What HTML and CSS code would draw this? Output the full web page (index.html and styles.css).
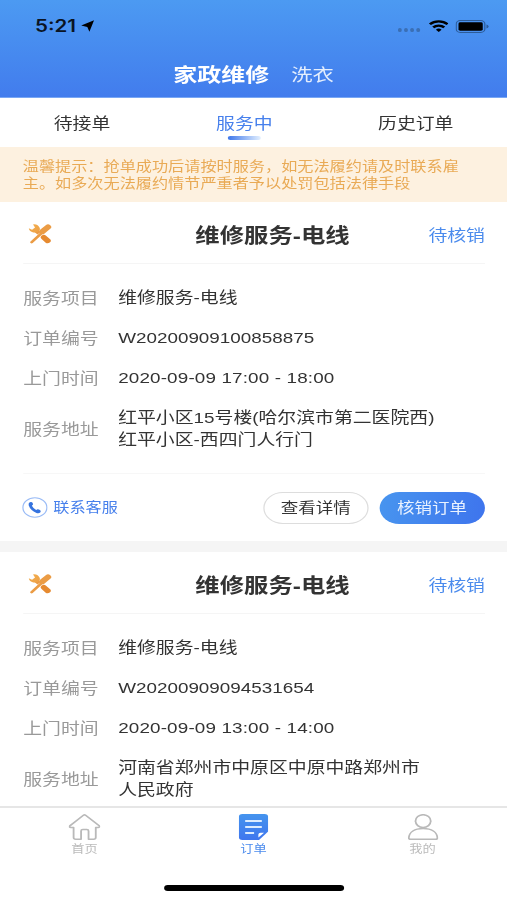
FILE: index.html
```html
<!DOCTYPE html>
<html lang="zh-CN">
<head>
<meta charset="utf-8">
<title>订单</title>
<link rel="stylesheet" href="styles.css">
</head>
<body>
<svg width="0" height="0" class="defs">
  <defs>
    <linearGradient id="tool" x1="0" y1="0" x2="1" y2="1"><stop offset="0" stop-color="#f3b04f"/><stop offset="1" stop-color="#eda046"/></linearGradient>
    <linearGradient id="doc" x1="0" y1="0" x2="0" y2="1"><stop offset="0" stop-color="#4594ee"/><stop offset="1" stop-color="#3f76ee"/></linearGradient>
    <symbol id="tools" viewBox="0 0 20 20">
      <path d="M11.6 7.6 16.2 3" stroke="#eb9c45" stroke-width="5.2" stroke-linecap="round"/>
      <path d="M11.4 8.6 2.8 18.2" stroke="#eb9c45" stroke-width="2.4" stroke-linecap="round"/>
      <path d="M6.4 7 8.8 9.4" stroke="#eb9c45" stroke-width="3.2"/>
      <path d="M12.8 13.4 15.9 16.7" stroke="#e68a30" stroke-width="5" stroke-linecap="round"/>
      <path d="M4 .4A4.8 4.8 0 0 1 9.4 6.4 4.9 4.9 0 0 1 .5 4.2L3.2 5.8 5.6 3.4Z" fill="url(#tool)"/>
    </symbol>
  </defs>
</svg>
<div class="screen">
  <header class="header">
    <div class="status">
      <span class="time">5:21</span>
      <svg class="arrow" width="11" height="12" viewBox="0 0 11 12"><path d="M10.8.3 7 11.7 5.3 7 .3 5.6Z"/></svg>
      <span class="dots"><i></i><i></i><i></i><i></i></span>
      <svg class="wifi" width="16" height="12" viewBox="0 0 16 12"><g fill="none" stroke="#000" stroke-width="2.3"><path d="M.8 4.3A10.2 10.2 0 0 1 15.2 4.3"/><path d="M3.5 7.4A6.4 6.4 0 0 1 12.5 7.4"/></g><path d="M8 12 5.7 9.8A3.2 3.2 0 0 1 10.3 9.8Z"/></svg>
      <svg class="battery" width="28" height="13" viewBox="0 0 28 13"><rect x=".5" y=".5" width="23.4" height="12" rx="3.4" fill="none" stroke="#2d5c99"/><rect x="2.4" y="2.3" width="19.8" height="8.4" rx="1.4"/><path d="M25.2 4.4Q27 5 27 6.5T25.2 8.6Z" fill="#2d5c99"/></svg>
    </div>
    <div class="categories"><b>家政维修</b><span>洗衣</span></div>
  </header>
  <nav class="tabs"><span>待接单</span><span class="active">服务中</span><span>历史订单</span></nav>
  <p class="notice">温馨提示：抢单成功后请按时服务，如无法履约请及时联系雇<br>主。如多次无法履约情节严重者予以处罚包括法律手段</p>
  <main class="orders">
    <article class="card">
      <div class="head"><svg class="tools" width="20" height="20"><use href="#tools"/></svg><h2>维修服务-电线</h2><span class="state">待核销</span></div>
      <dl class="rows">
        <dt>服务项目</dt><dd>维修服务-电线</dd>
        <dt>订单编号</dt><dd>W20200909100858875</dd>
        <dt>上门时间</dt><dd class="date">2020-09-09 17:00 - 18:00</dd>
        <dt>服务地址</dt><dd class="address">红平小区15号楼(哈尔滨市第二医院西)<br>红平小区-西四门人行门</dd>
      </dl>
      <div class="foot">
        <svg class="phone" width="21" height="21" viewBox="0 0 21 21"><circle cx="10.5" cy="10.5" r="9.8" fill="#fff" stroke="#9bbcf6"/><path d="M6.3 5.2Q8 4.4 8.7 6L9 7.6 8 8.8Q9.2 11.5 11.5 13L12.7 12.3Q13.2 12 14.6 13.1 15.8 14 15 15.2 13.8 16.8 11.8 15.9 6.8 13.5 5.4 8.3 5 6 6.3 5.2Z" fill="#3573df"/></svg>
        <span class="contact">联系客服</span>
        <span class="btn">查看详情</span><span class="btn primary">核销订单</span>
      </div>
    </article>
    <article class="card">
      <div class="head"><svg class="tools" width="20" height="20"><use href="#tools"/></svg><h2>维修服务-电线</h2><span class="state">待核销</span></div>
      <dl class="rows">
        <dt>服务项目</dt><dd>维修服务-电线</dd>
        <dt>订单编号</dt><dd>W20200909094531654</dd>
        <dt>上门时间</dt><dd class="date">2020-09-09 13:00 - 14:00</dd>
        <dt>服务地址</dt><dd class="address">河南省郑州市中原区中原中路郑州市<br>人民政府</dd>
      </dl>
    </article>
  </main>
  <footer class="bottom">
    <div class="menu">
      <div class="item"><svg width="26" height="26" viewBox="0 0 26 26" fill="none" stroke="#b9b9b9" stroke-width="1.5" stroke-linejoin="round"><path d="M12.1 1.3Q13 .5 13.9 1.3L25 11.7Q25.8 13.4 24 13.5H22.2V23.5Q22.2 25.2 20.5 25.2H16.3V17Q16.3 15.6 14.9 15.6H11.6Q10.2 15.6 10.2 17V25.2H5.8Q4.1 25.2 4.1 23.5V13.5H2Q.2 13.4 1 11.9Z"/></svg><span>首页</span></div>
      <div class="item on"><svg width="24" height="26" viewBox="0 0 24 26"><path d="M3 0H21Q24 0 24 3V17.5L16.5 26H3Q0 26 0 23V3Q0 0 3 0Z" fill="url(#doc)"/><path d="M5.2 7H18.8M5.2 13H18.8M5.2 19H12.5" stroke="#dcecff" stroke-width="1.8"/><path d="M16 23.6V20.6Q16 18.8 17.8 18.8H20.6Z" fill="#fff"/></svg><span>订单</span></div>
      <div class="item"><svg width="25" height="26" viewBox="0 0 25 26" fill="none" stroke="#b9b9b9" stroke-width="1.5"><ellipse cx="12.5" cy="7.1" rx="6.2" ry="6.4"/><path d="M2.3 25.2Q.7 25.2.8 23.8C1.2 18 5.5 14.5 12.5 14.5S23.8 18 24.2 23.8Q24.3 25.2 22.7 25.2Z"/></svg><span>我的</span></div>
    </div>
    <div class="indicator"></div>
  </footer>
</div>
</body>
</html>
```
FILE: styles.css
```css
* { box-sizing: border-box; margin: 0; padding: 0; }
html, body { width: 507px; height: 900px; overflow: hidden; background: #fff; }
.defs { display: block; height: 0; }

/* 414pt-wide layout, widened to fill the window */
.screen {
  width: 414px;
  height: 900px;
  display: flex;
  flex-direction: column;
  overflow: hidden;
  transform: scaleX(1.22464);
  transform-origin: 0 0;
  font-family: "Liberation Sans", "Noto Sans CJK SC", sans-serif;
  font-size: 15.4px;
  color: #333;
  white-space: nowrap;
}

.header { height: 98px; flex: none; background: linear-gradient(#4c9af2, #427ced); border-bottom: 1px solid #79a7f4; }
.status { height: 52px; display: flex; align-items: center; padding-left: 28.6px; }
.time { width: 37px; font: 600 16.8px/20px Inter, sans-serif; color: #0a1424; }
.dots { display: flex; gap: 2.2px; margin: 8px 7px 0 auto; }
.dots i { width: 2.8px; height: 3.2px; border-radius: 50%; background: #3a6fb5; }
.battery { margin: 0 14px 0 6px; }
.wifi { width: 16.5px; }
.categories { height: 42px; display: flex; align-items: center; padding-left: 141.5px; gap: 18px; color: #fff; font-size: 17.4px; }
.categories b { font-size: 19.6px; }
.categories span { color: #e4eefd; }

.tabs { height: 49px; flex: none; display: grid; grid-template-columns: 134px 131px 149px; line-height: 51px; text-align: center; }
.tabs .active { color: #4780ec; position: relative; }
.tabs .active::after { content: ""; position: absolute; left: 52px; top: 38px; width: 27px; height: 3.5px; border-radius: 2px; background: linear-gradient(90deg, #3d76ea, #e3f0ff); }
.notice { height: 55px; flex: none; padding: 10.5px 0 0 18.6px; background: #fdf1e0; color: #e9aa55; font-size: 13.2px; line-height: 17.9px; }

.orders { flex: 1; min-height: 0; overflow: hidden; background: #f5f5f5; display: flex; flex-direction: column; gap: 11px; }
.card { height: 339px; flex: none; background: #fff; padding: 0 18px 0 19px; }
.head { height: 62px; display: grid; grid-template-columns: 90px 1fr 60px; align-items: center; padding-top: 5px; border-bottom: 1px solid #f5f5f5; }
.tools { margin-left: 3.5px; margin-top: -2px; }
.head h2 { font-size: 19.9px; line-height: 28px; padding-top: 2px; text-align: center; }
.state { color: #4b8bed; text-align: right; padding-bottom: 3px; }
.rows { display: grid; grid-template-columns: 77.5px 1fr; grid-template-rows: 40px 40px 40px 62px; align-items: center; padding-top: 14px; height: 210px; border-bottom: 1px solid #f7f7f7; }
.rows dt { color: #999; padding-bottom: 3px; }
.rows dd { line-height: 22px; }
.rows .date { letter-spacing: .12px; }
.foot { height: 67px; display: flex; align-items: center; }
.phone { margin-left: -1px; }
.contact { margin-left: 4.5px; margin-right: auto; padding-bottom: 2px; font-size: 13.2px; color: #4780ec; }
.btn { width: 86.5px; height: 32px; line-height: 30px; border: 1px solid #ddd; border-radius: 16px; text-align: center; font-size: 14.3px; }
.btn.primary { margin-left: 8.5px; border: 0; line-height: 32px; color: #e9f2ff; background: linear-gradient(100deg, #4895ef, #3e74ed); }

.bottom { height: 94px; flex: none; border-top: 2px solid #e6e6e6; background: #fff; }
.menu { display: grid; grid-template-columns: repeat(3, 1fr); height: 77px; }
.item { display: flex; flex-direction: column; align-items: center; padding-top: 6px; font-size: 10.8px; line-height: 19px; color: #bbb; }
.item.on { color: #4b8bed; }
.indicator { width: 147px; height: 6px; margin: 0 auto; border-radius: 3px; background: #000; }
```
